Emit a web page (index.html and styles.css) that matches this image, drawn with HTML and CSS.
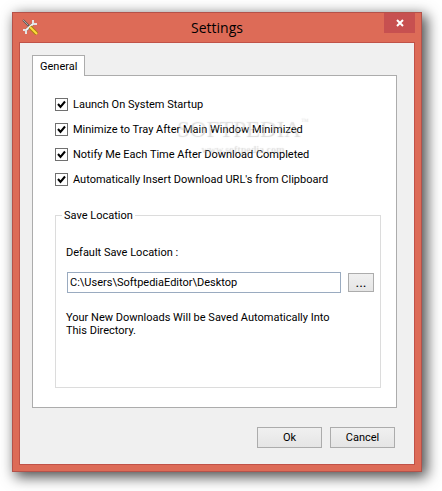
FILE: index.html
```html
<!DOCTYPE html>
<html lang="en">
<head>
    <meta charset="UTF-8">
    <meta name="viewport" content="width=device-width, initial-scale=1.0">
    <title>Settings</title>
    <link rel="stylesheet" href="styles.css">
</head>
<body>
    <div class="window">
        <header class="titlebar">
            <svg class="app-icon" viewBox="0 0 16 16" aria-hidden="true">
                <path d="M1 1l7 7" stroke="#5f5a58" stroke-width="2"/>
                <path d="M1 1l5 5" stroke="#a9a5a2" stroke-width="1"/>
                <path d="M3 12L12 4" stroke="#77706d" stroke-width="3"/>
                <path d="M3 12L12 4" stroke="#f4f4f4" stroke-width="2"/>
                <path d="M11 1v3l1 1h3M1 11h2l1 1v3" fill="none" stroke="#e4e4e4" stroke-width="2"/>
                <path d="M8 8l7 7" stroke="#a98312" stroke-width="4"/>
                <path d="M8 8l7 7" stroke="#ffda3d" stroke-width="2"/>
            </svg>
            <h1>Settings</h1>
            <button class="close" aria-label="Close">
                <svg viewBox="0 0 8 8"><path d="M1 1l6 6M7 1L1 7"/></svg>
            </button>
        </header>

        <form class="content">
            <div class="tabs">
                <button type="button" class="tab">General</button>
            </div>
            <div class="panel">
                <label class="option"><input type="checkbox" checked>Launch On System Startup</label>
                <label class="option"><input type="checkbox" checked>Minimize to Tray After Main Window Minimized</label>
                <label class="option"><input type="checkbox" checked>Notify Me Each Time After Download Completed</label>
                <label class="option"><input type="checkbox" checked>Automatically Insert Download URL's from Clipboard</label>

                <div class="watermark">
                    <div class="watermark-name">SOFTPEDIA<sup>™</sup></div>
                    <div class="watermark-url">www.softpedia.com</div>
                </div>

                <fieldset class="group">
                    <legend>Save Location</legend>
                    <label for="location">Default Save Location :</label>
                    <div class="location-row">
                        <input type="text" id="location" value="C:\Users\SoftpediaEditor\Desktop">
                        <button type="button" class="btn browse">...</button>
                    </div>
                    <p>Your New Downloads Will be Saved Automatically Into<br>This Directory.</p>
                </fieldset>
            </div>

            <div class="actions">
                <button type="button" class="btn">Ok</button>
                <button type="button" class="btn">Cancel</button>
            </div>
        </form>
    </div>
</body>
</html>
```

FILE: styles.css
```css
* {
    box-sizing: border-box;
}

body {
    margin: 0;
    padding: 12px 20px 20px 12px;
    background-color: #fff;
    color: #000;
    font-family: Tahoma, Roboto, sans-serif;
    font-size: 11px;
    line-height: 13px;
}

button,
input {
    font: inherit;
    color: inherit;
}

.window {
    padding: 0 6px 6px;
    background-color: #dd6b57;
    border: 1px solid #b4524a;
    box-shadow: 4px 4px 13px 1px rgba(0, 0, 0, 0.7);
}

.titlebar {
    display: grid;
    grid-template-columns: 32px 1fr 32px;
    align-items: start;
    height: 29px;
}

.app-icon {
    width: 16px;
    height: 16px;
    margin: 6px 0 0 3px;
}

.titlebar h1 {
    margin: 0;
    font-family: "Segoe UI", "Open Sans", sans-serif;
    font-size: 14px;
    font-weight: normal;
    line-height: 29px;
    text-align: center;
}

.close {
    display: flex;
    align-items: center;
    justify-content: center;
    justify-self: end;
    width: 31px;
    height: 20px;
    padding: 0;
    background-color: #c75050;
    border: none;
}

.close svg {
    width: 8px;
    height: 8px;
}

.close path {
    stroke: #fff;
    stroke-width: 2;
}

.content {
    padding: 12px 17px 16px 12px;
    background-color: #f0f0f0;
    border: 1px solid #c05248;
}

.tabs {
    display: flex;
}

.tab {
    position: relative;
    z-index: 1;
    height: 21px;
    margin-bottom: -1px;
    padding: 0 7px;
    background-color: #fff;
    border: 1px solid #acacac;
    border-bottom: none;
}

.panel {
    position: relative;
    padding: 16px 15px 19px 22px;
    background-color: #fff;
    border: 1px solid #acacac;
}

.option {
    display: flex;
    align-items: center;
    gap: 5px;
    height: 25px;
}

.option input {
    appearance: none;
    width: 13px;
    height: 13px;
    margin: 0;
    background: #fff url('data:image/svg+xml,<svg xmlns="http://www.w3.org/2000/svg" viewBox="0 0 11 11"><path d="M2 5l2.5 3L9 2.500" fill="none" stroke="black" stroke-width="2"/></svg>');
    border: 1px solid #707070;
}

.option input:not(:checked) {
    background-image: none;
}

.watermark {
    position: absolute;
    top: 41px;
    left: 143px;
    color: rgba(255, 255, 255, 0.3);
    font-family: "Liberation Serif", serif;
    text-align: center;
    text-shadow: 1px 1px 1px rgba(0, 0, 0, 0.15);
    pointer-events: none;
}

.watermark-name {
    font-size: 23px;
    line-height: 24px;
}

.watermark-name sup {
    font-size: 8px;
    line-height: 8px;
    vertical-align: top;
}

.watermark-url {
    font-size: 10px;
    font-weight: bold;
    line-height: 16px;
}

.group {
    margin: 17px 0 0;
    padding: 24px 6px 50px 10px;
    border: 1px solid #dcdcdc;
}

.group legend {
    margin-left: -4px;
    padding: 0 2px;
}

.location-row {
    display: flex;
    align-items: center;
    gap: 7px;
    margin: 13px 0 18px 1px;
}

.location-row input {
    flex: 1;
    min-width: 0;
    height: 21px;
    padding: 0 2px;
    border: 1px solid #9aabc0;
}

.group p {
    margin: 0;
}

.actions {
    display: flex;
    justify-content: flex-end;
    gap: 8px;
    padding: 19px 2px 0 0;
}

.btn {
    width: 65px;
    height: 21px;
    padding: 0;
    background: linear-gradient(#f0f0f0, #e5e5e5);
    border: 1px solid #acacac;
}

.browse {
    width: 26px;
    height: 19px;
    font-size: 14px;
}
```
